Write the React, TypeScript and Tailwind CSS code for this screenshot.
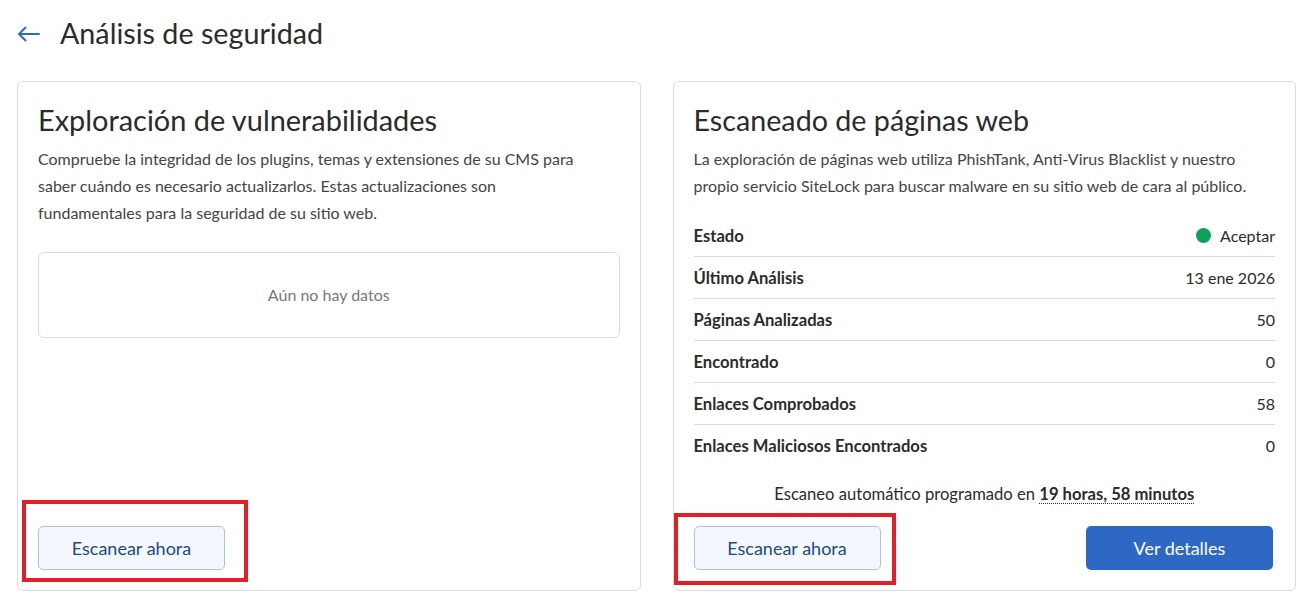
import React from "react";

const rows: { label: string; value: React.ReactNode }[] = [
  { label: "Estado", value: null },
  { label: "Último Análisis", value: "13 ene 2026" },
  { label: "Páginas Analizadas", value: "50" },
  { label: "Encontrado", value: "0" },
  { label: "Enlaces Comprobados", value: "58" },
  { label: "Enlaces Maliciosos Encontrados", value: "0" },
];

function ScanButton() {
  return (
    <button className="w-[187px] h-[44px] rounded-[5px] border border-[#a8c3ea] bg-[#f4f8fe] text-[#1b4a8a] text-[18px]">
      Escanear ahora
    </button>
  );
}

export default function App() {
  return (
    <div
      className="relative w-[1316px] h-[606px] bg-white text-[#333] overflow-hidden"
      style={{ fontFamily: "Lato, 'Noto Sans', sans-serif" }}
    >
      <header className="flex items-center h-[66px] pl-[17px] gap-[20px]">
        <svg width="23" height="16" viewBox="0 0 23 16" className="mt-[1px]">
          <path
            d="M22 8H2M8.5 1.5L2 8l6.5 6.5"
            fill="none"
            stroke="#2d6bc6"
            strokeWidth="2"
            strokeLinecap="round"
            strokeLinejoin="round"
          />
        </svg>
        <h1 className="text-[28.7px] leading-[36px] text-[#2b2b2b]">Análisis de seguridad</h1>
      </header>

      <div className="grid grid-cols-2 gap-8 pl-[17px] pr-[20px] pt-[15px]">
        <section className="flex flex-col h-[510px] border border-[#dcdcdc] rounded-md p-5">
          <h2 className="text-[28.9px] leading-[36px] text-[#2b2b2b]">Exploración de vulnerabilidades</h2>
          <p className="mt-[7px] text-[16px] leading-[27px] text-[#444]">
            Compruebe la integridad de los plugins, temas y extensiones de su CMS para
            <br />
            saber cuándo es necesario actualizarlos. Estas actualizaciones son
            <br />
            fundamentales para la seguridad de su sitio web.
          </p>
          <div className="mt-[26px] h-[86px] border border-[#dcdcdc] rounded-md flex items-center justify-center text-[16px] text-[#777]">
            Aún no hay datos
          </div>
          <div className="mt-auto">
            <ScanButton />
          </div>
        </section>

        <section className="flex flex-col h-[510px] border border-[#dcdcdc] rounded-md p-5">
          <h2 className="text-[28.7px] leading-[36px] text-[#2b2b2b]">Escaneado de páginas web</h2>
          <p className="mt-[7px] text-[16px] leading-[27px] text-[#444]">
            La exploración de páginas web utiliza PhishTank, Anti-Virus Blacklist y nuestro propio servicio SiteLock
            para buscar malware en su sitio web de cara al público.
          </p>
          <div className="mt-[16px]">
            {rows.map((r, i) => (
              <div
                key={r.label}
                className={`flex items-center justify-between h-[42px] ${
                  i < rows.length - 1 ? "border-b border-[#dcdcdc]" : ""
                }`}
              >
                <span className="font-bold text-[16.6px] leading-[20px] text-[#2b2b2b]">{r.label}</span>
                {r.value === null ? (
                  <span className="flex items-center gap-[9px] text-[16px] leading-[20px] text-[#2b2b2b]">
                    <span className="w-[15px] h-[15px] rounded-full bg-[#0aa35e]" />
                    Aceptar
                  </span>
                ) : (
                  <span className="text-[16px] leading-[20px] text-[#2b2b2b]">{r.value}</span>
                )}
              </div>
            ))}
          </div>
          <p className="mt-[15px] text-center text-[16.6px] text-[#2b2b2b]">
            Escaneo automático programado en{" "}
            <span className="font-bold underline decoration-dotted decoration-1 underline-offset-[3px]">
              19 horas, 58 minutos
            </span>
          </p>
          <div className="mt-auto flex items-center justify-between">
            <ScanButton />
            <button className="mr-[2px] w-[187px] h-[44px] rounded-[5px] bg-[#2d69c4] text-white text-[18px]">
              Ver detalles
            </button>
          </div>
        </section>
      </div>

      <div className="absolute left-[22px] top-[500px] w-[226px] h-[82px] border-4 border-[#e41e25]" />
      <div className="absolute left-[674px] top-[513px] w-[222px] h-[72px] border-4 border-[#e41e25]" />
    </div>
  );
}
